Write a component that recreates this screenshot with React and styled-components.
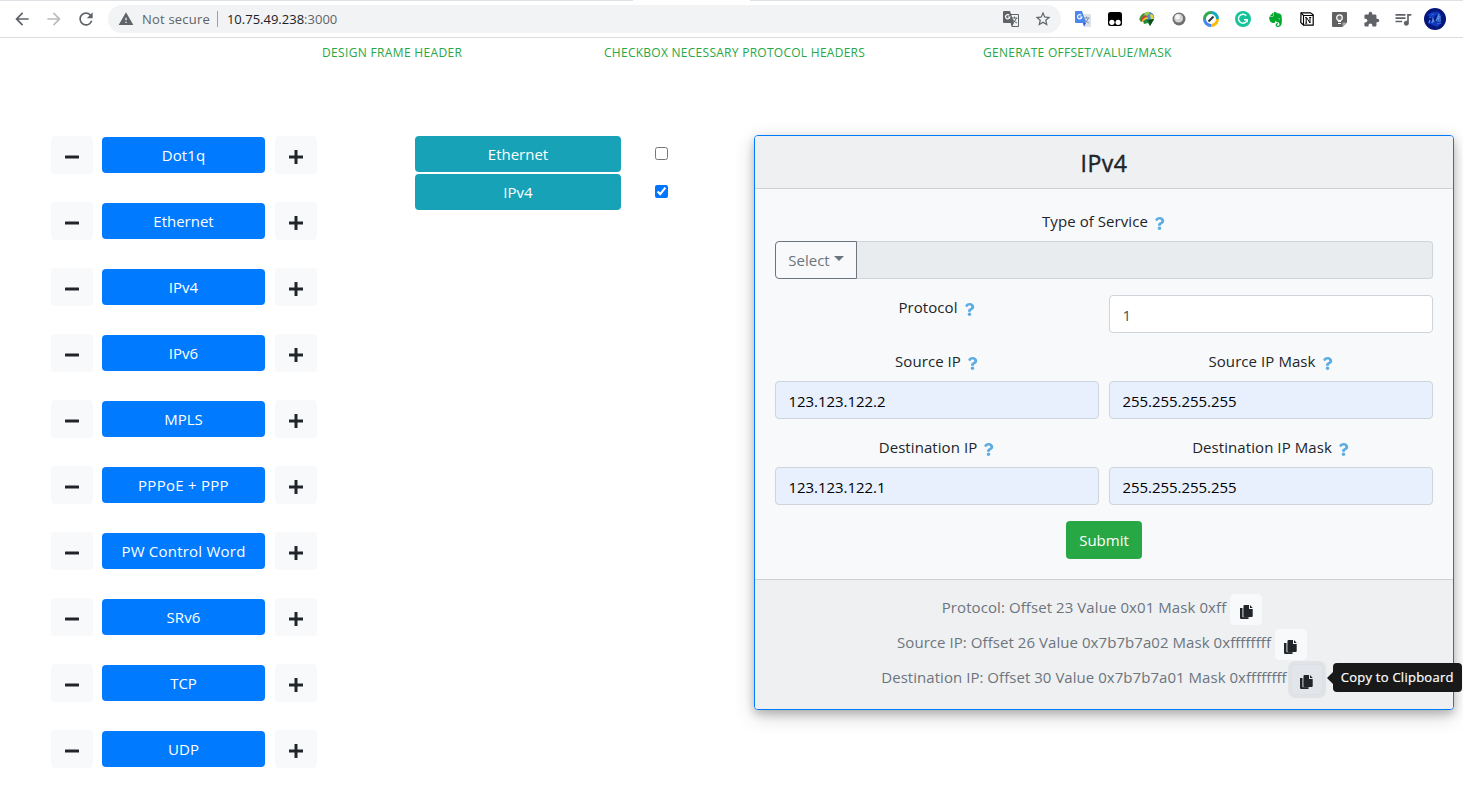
import React from 'react';
import styled, { createGlobalStyle } from 'styled-components';
import { MdArrowBack, MdArrowForward, MdRefresh, MdStarBorder, MdExtension, MdQueueMusic, MdWarning } from 'react-icons/md';
import { SiEvernote } from 'react-icons/si';
import { FaQuestion } from 'react-icons/fa';

const Global = createGlobalStyle`
  * { box-sizing: border-box; }
  html, body { margin: 0; height: 100%; overflow: hidden; background: #fff; }
  body { font-family: "Open Sans", "Noto Sans", sans-serif; font-size: 15px; line-height: 24px; color: #212529; }
  button, input { font: inherit; letter-spacing: inherit; }
`;

const Text = styled.span`
  display: inline-block;
  white-space: nowrap;
  letter-spacing: ${(p) => p.$ls || 0}px;
`;

const Page = styled.div`
  width: 1463px;
  height: 791px;
  overflow: hidden;
`;

/* The top line is open under the active tab. */
const Toolbar = styled.header`
  height: 38px;
  border-bottom: 1px solid #dadce0;
  background: linear-gradient(90deg, #dee1e6 633px, #fff 633px, #fff 750px, #dee1e6 750px) top / 100% 1px no-repeat;
  display: flex;
  align-items: center;
  padding: 1px 0 0 12px;
  color: #5f6368;
`;

const NavButtons = styled.div`
  display: flex;
  gap: 12px;
  margin-right: 12px;
  svg { display: block; }
`;

const AddressBar = styled.div`
  width: 953px;
  height: 28px;
  border-radius: 14px;
  background: #f1f3f4;
  display: flex;
  align-items: center;
  font-size: 13px;
  padding: 0 9px 0 10px;
`;

const Warn = styled(MdWarning)`margin-right: 8px;`;
const Divider = styled.i`width: 1px; height: 16px; background: #9aa0a6; margin: 0 9px 0 7px;`;
const Host = styled.span`color: #202124;`;
const Port = styled.span`color: #5f6368; flex: 1;`;
const OmniIcons = styled.div`display: flex; gap: 15px; align-items: center; svg { display: block; }`;

const Extensions = styled.div`
  display: grid;
  grid-template-columns: repeat(12, 32px);
  place-items: center;
  margin-left: 6px;
  svg { display: block; }
`;

const Steps = styled.div`
  display: flex;
  height: 98px;
  padding-top: 5px;
  color: #28a745;
  font-size: 12px;
  line-height: 20px;
`;
const Step = styled.div`
  width: ${(p) => p.$w}px;
  padding-left: ${(p) => p.$x}px;
`;

const Main = styled.main`
  display: flex;
  align-items: flex-start;
`;

const Protocols = styled.section`
  width: 266px;
  margin-left: 51px;
  display: flex;
  flex-direction: column;
  gap: 28px;
`;
const ProtocolRow = styled.div`
  display: grid;
  grid-template-columns: 51px 173px 42px;
  align-items: center;
  height: 38px;
`;
const IconButton = styled.button`
  width: 42px;
  height: 38px;
  border: 0;
  border-radius: 4px;
  background: #f8f9fa;
  color: #212529;
  display: grid;
  place-items: center;
  padding: 4px 0 0;
`;
const NameButton = styled.button`
  width: ${(p) => p.$w || 163}px;
  height: 36px;
  border: 0;
  border-radius: 4px;
  background: ${(p) => p.$bg || '#007bff'};
  color: #fff;
  padding: 0;
  line-height: 24px;
`;

const Selected = styled.section`
  margin-left: 98px;
  width: 339px;
  display: flex;
  flex-direction: column;
  gap: 2px;
`;
const SelectedRow = styled.div`
  display: flex;
  align-items: center;
`;
const Check = styled.input`
  width: 13px;
  height: 13px;
  margin: 0 0 2px 34px;
  accent-color: #0075ff;
`;

const Card = styled.section`
  width: 700px;
  height: 575px;
  margin-top: -1px;
  border: 1px solid #007bff;
  border-radius: 4px;
  background: #f8f9fa;
  box-shadow: 0 4px 8px rgba(0, 0, 0, 0.2), 0 6px 20px rgba(0, 0, 0, 0.19);
  display: flex;
  flex-direction: column;
`;
const CardHeader = styled.header`
  height: 53px;
  border-bottom: 1px solid #cfd2d5;
  border-radius: 3px 3px 0 0;
  background: #eff0f2;
  display: flex;
  justify-content: center;
  align-items: center;
  padding-top: 2px;
  font-size: 23px;
  letter-spacing: 0.5px;
  -webkit-text-stroke: 0.45px currentColor;
`;
const CardBody = styled.div`
  flex: 1;
  padding: 20px 20px 0;
  display: flex;
  flex-direction: column;
`;
const Label = styled.label`
  display: flex;
  justify-content: center;
  align-items: center;
  height: 24px;
  margin-bottom: 8px;
  gap: 5px;
  svg { color: #5dade2; margin-top: 4px; }
`;
const Group = styled.div`
  display: flex;
  height: 38px;
  margin-bottom: 16px;
`;
const SelectButton = styled.button`
  width: 82px;
  border: 1px solid #6c757d;
  border-radius: 4px 0 0 4px;
  background: transparent;
  color: #6c757d;
  display: flex;
  align-items: center;
  justify-content: center;
  gap: 4px;
  padding: 0;
`;
const Caret = styled.i`
  border: 5px solid transparent;
  border-top-color: currentColor;
  border-bottom: 0;
  margin-bottom: 3px;
`;
const Disabled = styled.div`
  flex: 1;
  border: 1px solid #ced4da;
  border-left: 0;
  border-radius: 0 4px 4px 0;
  background: #e9ecef;
`;
const Columns = styled.div`
  display: grid;
  grid-template-columns: 324px 324px;
  column-gap: 10px;
`;
const Field = styled.input`
  display: block;
  width: 324px;
  height: 38px;
  margin: 0 0 16px;
  padding: 2px 12px 0 12.5px;
  border: 1px solid #ced4da;
  border-radius: 4px;
  background: ${(p) => (p.$plain ? '#fff' : '#e8f0fe')};
  color: ${(p) => (p.$plain ? '#495057' : '#000')};
  letter-spacing: -0.05px;
`;
const Submit = styled.button`
  align-self: center;
  width: 76px;
  height: 38px;
  border: 0;
  border-radius: 4px;
  background: #28a745;
  color: #fff;
  padding: 0;
`;
const CardFooter = styled.footer`
  height: 130px;
  border-top: 1px solid #cfd2d5;
  border-radius: 0 0 3px 3px;
  background: #eff0f2;
  color: #6c757d;
  padding-top: 12px;
`;
const Result = styled.div`
  height: 35px;
  display: flex;
  justify-content: center;
  align-items: flex-start;
  gap: ${(p) => p.$gap || 4}px;
  padding-right: 4px;
  line-height: 31px;
`;
const CopyButton = styled.button`
  position: relative;
  width: 32px;
  height: 31px;
  margin-top: 2px;
  border: 1px solid ${(p) => (p.$active ? '#dae0e5' : '#f8f9fa')};
  border-radius: 4px;
  background: ${(p) => (p.$active ? '#e2e6ea' : '#f8f9fa')};
  box-shadow: ${(p) => (p.$active ? '0 0 0 3px #e1e3e6' : 'none')};
  color: #212529;
  display: grid;
  place-items: center;
  padding: 4px 0 0;
`;
const Tooltip = styled.div`
  position: absolute;
  left: 41px;
  top: -2px;
  width: 129px;
  height: 29px;
  border-radius: 4px;
  background: #191919;
  color: #fff;
  font-size: 13px;
  line-height: 29px;
  letter-spacing: 0.25px;
  -webkit-text-stroke: 0.2px #fff;
  text-align: center;
  white-space: nowrap;
  &::before {
    content: '';
    position: absolute;
    left: -6px;
    top: 9px;
    border: 6px solid transparent;
    border-left-width: 0;
    border-right-color: #191919;
  }
`;

const Minus = () => (
  <svg width="14" height="14" viewBox="0 0 14 14"><rect y="5.4" width="14" height="3.2" rx=".5" fill="currentColor" /></svg>
);
const Plus = () => (
  <svg width="14" height="14" viewBox="0 0 14 14"><path d="M5.500 0h3v5.500H14v3H8.500V14h-3V8.500H0v-3h5.500z" fill="currentColor" /></svg>
);
const CopyIcon = () => (
  <svg width="13" height="14" viewBox="0 0 13 14">
    <path d="M0 3h2.500v9h6v2H1.200Q0 14 0 12.800z" fill="currentColor" />
    <path d="M2.500 3h1v8.500h6v.8h-7z" fill="#8d9094" />
    <path d="M4.500 0H9v4h3.700v7Q12.700 12 11.700 12H4.500Q3.500 12 3.500 11V1Q3.500 0 4.500 0z" fill="currentColor" />
    <path d="M10 0l2.700 3H10z" fill="currentColor" />
  </svg>
);
const TranslateIcon = ({ color }) => (
  <svg width="16" height="16" viewBox="0 0 16 16">
    <path d="M6 3.500h9.500v12H9z" fill={color ? '#dfe3ea' : '#f1f3f4'} stroke={color ? '#dfe3ea' : '#5f6368'} />
    <path d="M8.500 7h6M11.500 5.500V7M13.500 7q-1 3.500-4.500 5M10 8.500q1.500 3 4 3.500" fill="none" stroke={color ? '#7d93a8' : '#5f6368'} />
    <path d="M1 0h6l4 12H1q-1 0-1-1V1q0-1 1-1z" fill={color ? '#4b86ee' : '#5f6368'} />
    <path d="M8 12h3l-2 3.500z" fill={color ? '#3455db' : '#5f6368'} />
    <path d="M6.300 4.200A2.200 2.200 0 1 0 6.900 6H4.800" fill="none" stroke="#fff" strokeWidth="1.200" />
  </svg>
);
const Monkey = () => (
  <svg width="14" height="14" viewBox="0 0 14 14">
    <rect width="14" height="14" rx="2.500" fill="#000" />
    <circle cx="3.900" cy="10.300" r="2.600" fill="#fff" /><circle cx="10.100" cy="10.300" r="2.600" fill="#fff" />
  </svg>
);
const Globe = () => (
  <svg width="16" height="16" viewBox="0 0 16 16">
    <circle cx="9.500" cy="6.500" r="5.800" fill="#4a8fd0" />
    <path d="M5 3q3-3.500 6-1.500L9 4 6 6z" fill="#a9cd4a" />
    <path d="M11 3l3 1 1 4-3 1z" fill="#e7d530" />
    <path d="M1 6q2-4 5-4Q4 5 3 11-1 10 1 6z" fill="#3b9a35" />
    <path d="M2 9q1-4 5-5l1 2q-4 1-5 5z" fill="#d63a28" />
    <path d="M3 10q1-3 5-4l1 2q-3 0-5 3z" fill="#f0c626" />
    <path d="M4 10l4-2 1 1 6-1-4 7-2-3-4 1z" fill="#26883a" />
    <path d="M8 9l7-1-4 7-1-4z" fill="#064f18" />
  </svg>
);
const Ball = () => (
  <svg width="14" height="14" viewBox="0 0 14 14">
    <circle cx="7" cy="7" r="6.500" fill="#707070" /><circle cx="6.600" cy="6.200" r="4.400" fill="#d5d5d5" /><circle cx="5.500" cy="5" r="2.400" fill="#f7f7f7" />
  </svg>
);
const Compass = () => (
  <svg width="16" height="16" viewBox="0 0 16 16" fill="none" strokeWidth="3">
    <path d="M1.500 8A6.500 6.500 0 0 1 8 1.500" stroke="#34a853" />
    <path d="M8 1.500A6.500 6.500 0 0 1 14.500 8" stroke="#11a8c0" />
    <path d="M14.500 8A6.500 6.500 0 0 1 8 14.500" stroke="#fbbc05" />
    <path d="M8 14.500A6.500 6.500 0 0 1 1.500 8" stroke="#4285f4" />
    <path d="M5.500 10.500l5-5" stroke="#333" strokeWidth="2" />
  </svg>
);
const Grammar = () => (
  <svg width="16" height="16" viewBox="0 0 16 16">
    <circle cx="8" cy="8" r="8" fill="#15c39a" />
    <path d="M11.300 4.700A4.500 4.500 0 1 0 12.400 8.500M9 8.700h3.300v2.600" fill="none" stroke="#fff" strokeWidth="1.400" />
  </svg>
);
const NotionIcon = () => (
  <svg width="14" height="14" viewBox="0 0 14 14">
    <path d="M1 .8h9.500l2.700 2v10.400H3.500L.8 10.500z" fill="#fff" stroke="#000" strokeWidth="1.200" />
    <path d="M1 1l2.500 2.500h9.700M3.500 3.500v9.700" fill="none" stroke="#000" strokeWidth="1.100" />
    <path d="M5.200 5.700h1.500L10 11V5.500M6.200 11V5.500M5.200 11.200h2M9.200 5.500h2" fill="none" stroke="#000" strokeWidth="1" />
  </svg>
);
const Keep = () => (
  <svg width="15" height="15" viewBox="0 0 15 15">
    <path d="M1 0h13q1 0 1 1v9.500L10.500 15H1q-1 0-1-1V1q0-1 1-1z" fill="#616161" />
    <path d="M10.500 15v-4.500H15z" fill="#a5a5a5" />
    <circle cx="7.500" cy="5.700" r="2.800" fill="#777" stroke="#fff" strokeWidth="1.200" />
    <path d="M6 9.500h3M6 11.500h3" stroke="#fff" strokeWidth="1.200" />
  </svg>
);
const Avatar = () => (
  <svg width="22" height="22" viewBox="0 0 22 22">
    <circle cx="11" cy="11" r="11" fill="#05177c" />
    <path d="M3 7q6-5 12-3l3 4-6-1-3 4zM4 15l5-2 9 2-5 4z" fill="#1238bf" />
    <path d="M5 15l1-3M8 15l1-4 1 3M12 13l3-7-1 8M16 8v6" fill="none" stroke="#4f8de8" strokeWidth="1.300" />
    <path d="M7 7l3-1M5 10l2-1M13 16l4-1" fill="none" stroke="#2f66d8" strokeWidth="1.200" />
  </svg>
);

const names = [
  ['Dot1q', 0.1], ['Ethernet', 0], ['IPv4', 0], ['IPv6', 0], ['MPLS', 0],
  ['PPPoE + PPP', 0.27], ['PW Control Word', 0.22], ['SRv6', 0.1], ['TCP', 0], ['UDP', 0],
];

const FieldLabel = ({ children }) => (
  <Label><Text $ls={0.07}>{children}</Text><FaQuestion size={13} /></Label>
);

export default function App() {
  return (
    <Page>
      <Global />
      <Toolbar>
        <NavButtons>
          <MdArrowBack size={20} />
          <MdArrowForward size={20} color="#babcbe" />
          <MdRefresh size={20} />
        </NavButtons>
        <AddressBar>
          <Warn size={16} />
          <Text $ls={0.2}>Not secure</Text>
          <Divider />
          <Host>10.75.49.238</Host><Port>:3000</Port>
          <OmniIcons><TranslateIcon /><MdStarBorder size={18} /></OmniIcons>
        </AddressBar>
        <Extensions>
          <TranslateIcon color /><Monkey /><Globe /><Ball /><Compass /><Grammar />
          <SiEvernote size={15} color="#00a82d" /><NotionIcon /><Keep />
          <MdExtension size={17} /><MdQueueMusic size={20} /><Avatar />
        </Extensions>
      </Toolbar>
      <Steps>
        <Step $w={604} $x={322}><Text $ls={0.34}>DESIGN FRAME HEADER</Text></Step>
        <Step $w={379} $x={0}><Text $ls={0.27}>CHECKBOX NECESSARY PROTOCOL HEADERS</Text></Step>
        <Step $w={300} $x={0}><Text $ls={0.27}>GENERATE OFFSET/VALUE/MASK</Text></Step>
      </Steps>
      <Main>
        <Protocols>
          {names.map(([n, ls]) => (
            <ProtocolRow key={n}>
              <IconButton aria-label={`Remove ${n}`}><Minus /></IconButton>
              <NameButton><Text $ls={ls}>{n}</Text></NameButton>
              <IconButton aria-label={`Add ${n}`}><Plus /></IconButton>
            </ProtocolRow>
          ))}
        </Protocols>
        <Selected>
          <SelectedRow><NameButton $w={206} $bg="#17a2b8">Ethernet</NameButton><Check type="checkbox" /></SelectedRow>
          <SelectedRow><NameButton $w={206} $bg="#17a2b8">IPv4</NameButton><Check type="checkbox" defaultChecked /></SelectedRow>
        </Selected>
        <Card>
          <CardHeader>IPv4</CardHeader>
          <CardBody>
            <FieldLabel>Type of Service</FieldLabel>
            <Group>
              <SelectButton>Select<Caret /></SelectButton>
              <Disabled />
            </Group>
            <Columns>
              <FieldLabel>Protocol</FieldLabel>
              <Field $plain defaultValue="1" />
              <FieldLabel>Source IP</FieldLabel>
              <FieldLabel>Source IP Mask</FieldLabel>
              <Field defaultValue="123.123.122.2" />
              <Field defaultValue="255.255.255.255" />
              <FieldLabel>Destination IP</FieldLabel>
              <FieldLabel>Destination IP Mask</FieldLabel>
              <Field defaultValue="123.123.122.1" />
              <Field defaultValue="255.255.255.255" />
            </Columns>
            <Submit>Submit</Submit>
          </CardBody>
          <CardFooter>
            <Result><Text $ls={0.08}>Protocol: Offset 23 Value 0x01 Mask 0xff</Text><CopyButton aria-label="Copy"><CopyIcon /></CopyButton></Result>
            <Result><Text $ls={0.06}>Source IP: Offset 26 Value 0x7b7b7a02 Mask 0xffffffff</Text><CopyButton aria-label="Copy"><CopyIcon /></CopyButton></Result>
            <Result>
              <Text $ls={0.04}>Destination IP: Offset 30 Value 0x7b7b7a01 Mask 0xffffffff</Text>
              <CopyButton $active aria-label="Copy"><CopyIcon /><Tooltip>Copy to Clipboard</Tooltip></CopyButton>
            </Result>
          </CardFooter>
        </Card>
      </Main>
    </Page>
  );
}
